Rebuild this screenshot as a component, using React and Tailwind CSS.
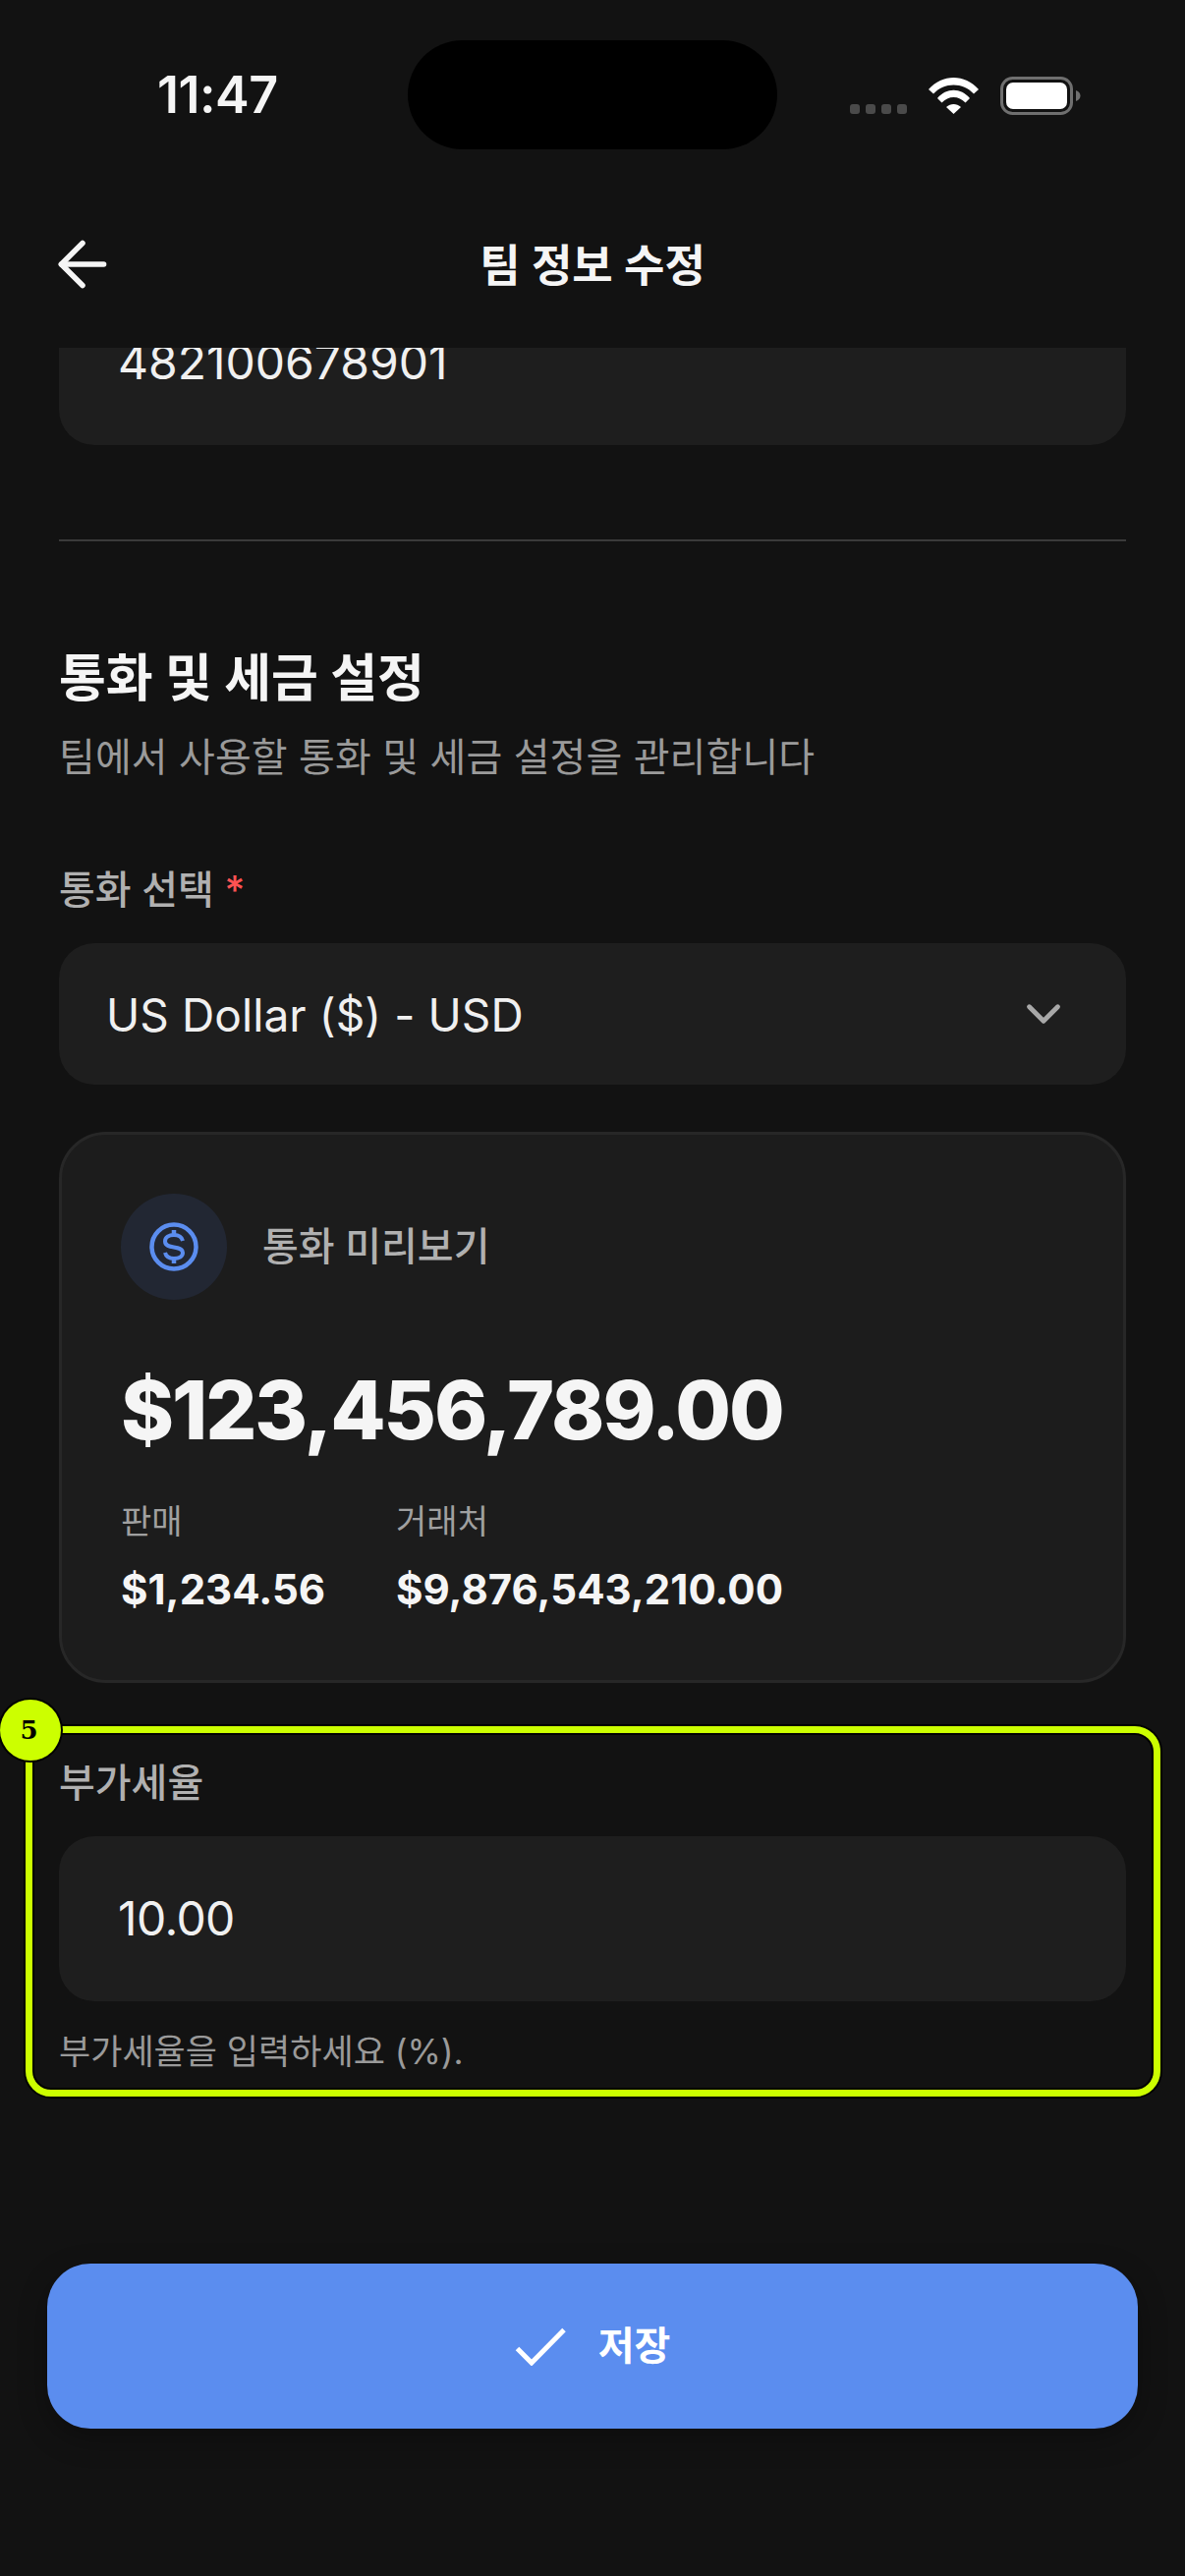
import React from 'react';
import { ArrowLeft, ChevronDown } from 'lucide-react';

const FONT = "font-['Inter','Noto_Sans_CJK_KR',sans-serif]";

const StatusBar = () => (
  <div className="flex h-[190px] pt-[41px] items-start">
    <div className="w-[415px] h-[111px] flex items-center pl-[160px]">
      <span className="text-[52px] leading-none font-semibold text-[#f5f5f5] tracking-[-0.5px]">11:47</span>
    </div>
    <div className="w-[376px] h-[111px] rounded-[56px] bg-black" />
    <div className="flex items-start pl-[74px] pt-[37px]">
      <div className="flex gap-[6px] mt-[28px]">
        <div className="w-[10px] h-[10px] rounded-[3px] bg-[#4a4a4a]" />
        <div className="w-[10px] h-[10px] rounded-[3px] bg-[#4a4a4a]" />
        <div className="w-[10px] h-[10px] rounded-[3px] bg-[#4a4a4a]" />
        <div className="w-[10px] h-[10px] rounded-[3px] bg-[#4a4a4a]" />
      </div>
      <svg width="51" height="37" viewBox="0 0 51 37" className="ml-[22px] mt-[1px]" fill="#fff">
        <path d="M0 12 C14 -4 37 -4 51 12 L46 16.5 C35 4.5 16 4.5 5 16.5 Z" />
        <path d="M9 21 C18 10 33 10 42 21 L37.5 25.5 C31 18 20 18 13.5 25.5 Z" />
        <path d="M18 30 C22.5 26 28.5 26 33 30 L25.5 37 Z" />
      </svg>
      <svg width="82" height="39" viewBox="0 0 82 39" className="ml-[22px]">
        <rect x="1.5" y="1.5" width="71" height="36" rx="11" fill="none" stroke="#6f6f6f" strokeWidth="3" />
        <rect x="6" y="6" width="62" height="27" rx="7" fill="#fff" />
        <path d="M77 14 C80 15 81.5 17 81.5 19.5 C81.5 22 80 24 77 25 Z" fill="#6f6f6f" />
      </svg>
    </div>
  </div>
);

const Header = () => (
  <div className="relative h-[164px] flex items-center justify-center">
    <button className="absolute left-[47px] top-[42px]">
      <ArrowLeft size={74} strokeWidth={1.8} color="#f5f5f5" />
    </button>
    <h1 className="text-[45px] leading-[60px] font-semibold text-[#f5f5f5] mb-[3px]">팀 정보 수정</h1>
  </div>
);

const TextInput = ({ value, className = '', textClassName = '' }) => (
  <div className={`h-[168px] rounded-[36px] bg-[#1e1e1e] flex items-center pl-[60px] ${className}`}>
    <span className={`text-[48px] leading-none text-[#f0f0f0] ${textClassName}`}>{value}</span>
  </div>
);

// dollar mark with ticks only above and below the S
const DollarIcon = () => (
  <svg width="50" height="50" viewBox="0 0 50 50" fill="none" stroke="#5b8def" strokeWidth="4.5">
    <circle cx="25" cy="25" r="22.5" />
    <path d="M34 19 C33 15 29.5 13 25 13 C20 13 16 15.5 16 19.5 C16 24 20.5 24.8 25 25.5 C29.5 26.2 34 27 34 31 C34 35 30 37 25 37 C20.5 37 17 35 16 31" strokeWidth="4" />
    <path d="M25 8 V13 M25 37 V42" />
  </svg>
);

const CurrencyPreview = () => (
  <div className="mt-[48px] h-[561px] rounded-[48px] bg-[#1c1c1c] border-[3px] border-[#272727] pl-[60px] pt-[60px]">
    <div className="flex items-center gap-[36px]">
      <div className="w-[108px] h-[108px] rounded-full bg-[#222733] flex items-center justify-center">
        <DollarIcon />
      </div>
      <span className="text-[40px] leading-[56px] font-medium text-[#b0b0b0]">통화 미리보기</span>
    </div>
    <div className="mt-[63px] text-[82px] leading-[100px] font-extrabold text-[#f5f5f5] tracking-[-2.1px]">$123,456,789.00</div>
    <div className="mt-[39px] flex gap-[72px]">
      <div>
        <div className="text-[34px] leading-[48px] text-[#a0a0a0]">판매</div>
        <div className="mt-[20px] text-[42px] leading-[50px] font-bold text-[#f5f5f5]">$1,234.56</div>
      </div>
      <div>
        <div className="text-[34px] leading-[48px] text-[#a0a0a0]">거래처</div>
        <div className="mt-[20px] text-[42px] leading-[50px] font-bold text-[#f5f5f5]">$9,876,543,210.00</div>
      </div>
    </div>
  </div>
);

export default function App() {
  return (
    <div className={`w-[1206px] h-[2622px] bg-[#121212] overflow-hidden flex flex-col ${FONT}`}>
      <StatusBar />
      <Header />
      <div className="flex-1 overflow-hidden px-[60px]">
        <TextInput value="482100678901" className="-mt-[69px]" />
        <div className="mt-[96px] h-[2px] bg-[#3a3a3a]" />

        <h2 className="mt-[110px] text-[52px] leading-[60px] font-bold text-[#f5f5f5]">통화 및 세금 설정</h2>
        <p className="mt-[20px] text-[40px] tracking-[0.1px] leading-[60px] text-[#9a9a9a]">팀에서 사용할 통화 및 세금 설정을 관리합니다</p>

        <div className="mt-[75px] text-[40px] leading-[60px] font-medium text-[#b0b0b0]">
          통화 선택 <span className="text-[#ff5252]">*</span>
        </div>
        <div className="mt-[24px] h-[144px] rounded-[36px] bg-[#1e1e1e] flex items-center justify-between pl-[48px] pr-[55px]">
          <span className="text-[46px] leading-none text-[#f0f0f0] tracking-[0.1px] mt-[2px]">US Dollar ($) - USD</span>
          <ChevronDown size={58} strokeWidth={2} color="#a8a8a8" />
        </div>

        <CurrencyPreview />

        {/* highlighted field */}
        <div className="relative mt-[44px] -ml-[34px] -mr-[35px] h-[377px] rounded-[26px] border-[7px] border-[#ccff00] shadow-[0_0_0_2px_#000,inset_0_0_0_2px_#000] pl-[27px] pr-[28px] pt-[25px]">
          <div className="absolute -left-[33px] -top-[34px] w-[62px] h-[62px] rounded-full bg-[#ccff00] shadow-[0_0_0_2px_#000] flex items-center justify-center">
            <span className="text-[26px] leading-none font-bold text-black font-['DejaVu_Serif',serif] -ml-[3px]">5</span>
          </div>
          <div className="text-[40px] leading-[52px] font-medium text-[#b0b0b0]">부가세율</div>
          <TextInput value="10.00" className="mt-[28px]" textClassName="tracking-[-0.6px]" />
          <div className="mt-[28px] text-[35px] leading-[46px] text-[#9a9a9a]">부가세율을 입력하세요 (%).</div>
        </div>
      </div>

      <div className="px-[48px] pb-[150px]">
        <button className="w-full h-[168px] rounded-[44px] bg-[#5b8def] shadow-[0_10px_30px_rgba(0,0,0,0.3)] flex items-center justify-center gap-[33px]">
          <svg width="52" height="39" viewBox="0 0 52 39" fill="none" stroke="#fff" strokeWidth="5">
            <path d="M2.5 21.5 L17 36 L50 2.5" />
          </svg>
          <span className="text-[40px] leading-[56px] font-bold text-white">저장</span>
        </button>
      </div>
    </div>
  );
}
